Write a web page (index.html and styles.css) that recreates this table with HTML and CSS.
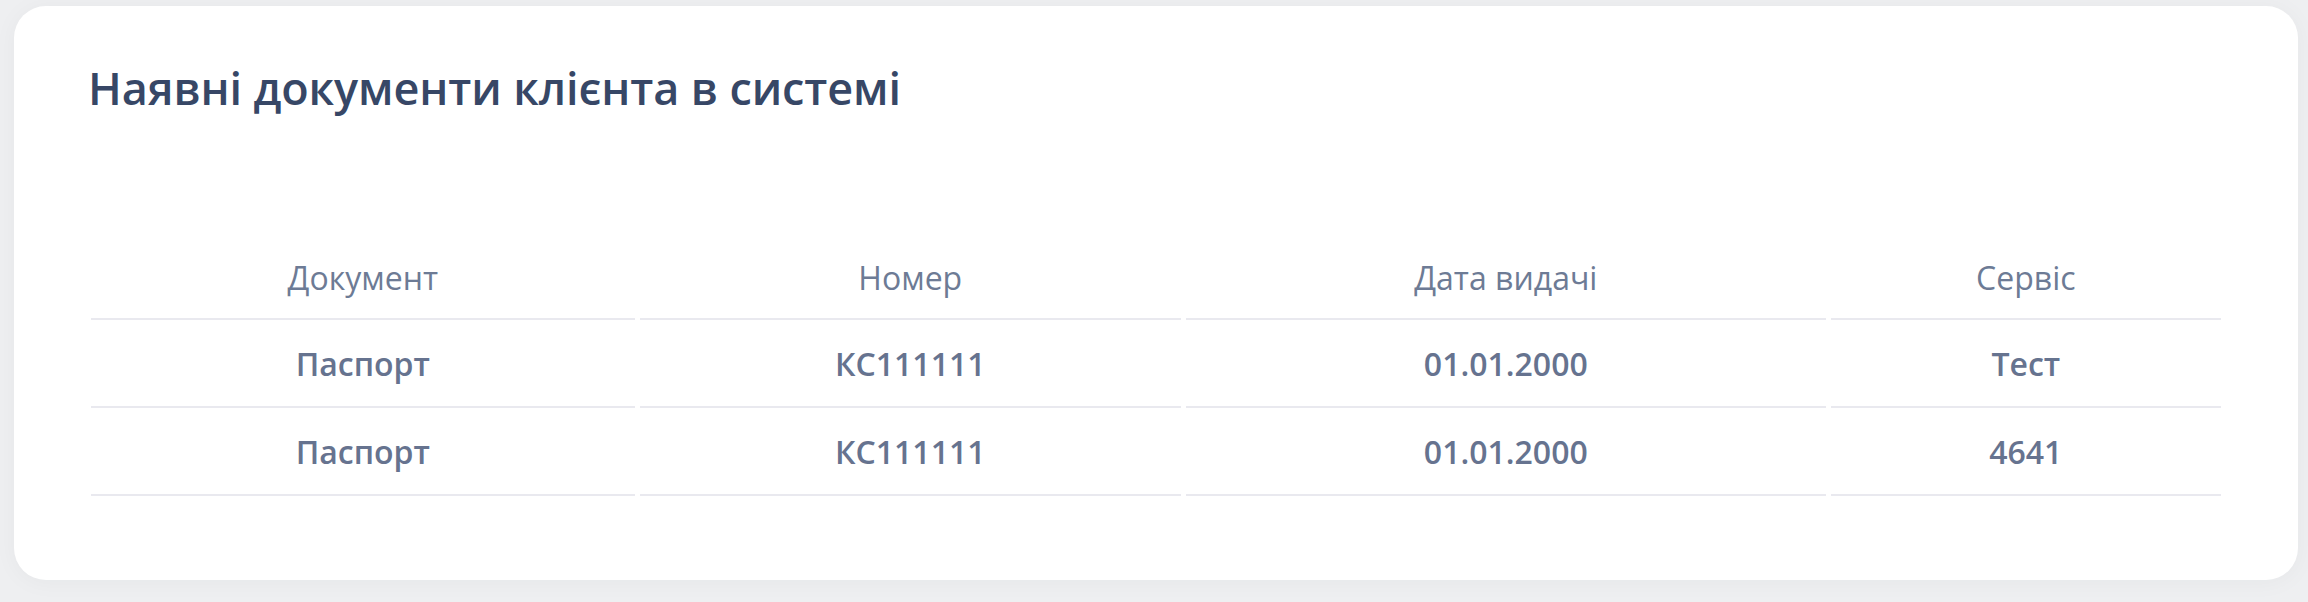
FILE: index.html
```html
<!DOCTYPE html>
<html lang="uk">
<head>
<meta charset="utf-8">
<link rel="stylesheet" href="styles.css">
</head>
<body>
<div class="page">
  <section class="card">
    <h1 class="title">Наявні документи клієнта в системі</h1>
    <table class="docs">
      <colgroup>
        <col class="c1"><col class="c2"><col class="c3"><col class="c4">
      </colgroup>
      <thead>
        <tr><th>Документ</th><th>Номер</th><th>Дата видачі</th><th>Сервіс</th></tr>
      </thead>
      <tbody>
        <tr><td>Паспорт</td><td>КС111111</td><td>01.01.2000</td><td>Тест</td></tr>
        <tr><td>Паспорт</td><td>КС111111</td><td>01.01.2000</td><td>4641</td></tr>
      </tbody>
    </table>
  </section>
</div>
</body>
</html>
```

FILE: styles.css
```css
html, body {
  margin: 0;
  padding: 0;
}
body {
  background: #eeeff1;
  font-family: "Open Sans", "Noto Sans", sans-serif;
  width: 2308px;
  height: 602px;
  overflow: hidden;
}
.page {
  padding: 6px 10px 0 14px;
}
.card {
  background: #ffffff;
  border-radius: 32px;
  height: 574px;
  box-sizing: border-box;
  padding: 52px 72px 0 72px;
  box-shadow: 0 2px 24px rgba(30, 40, 60, 0.04);
}
.title {
  margin: 0 0 0 2px;
  font-size: 45px;
  line-height: 60px;
  font-weight: 600;
  color: #374766;
  letter-spacing: -0.1px;
}
.docs {
  width: 100%;
  margin-top: 116px;
  border-collapse: separate;
  border-spacing: 5px 0;
  text-align: center;
}
.c1 { width: 543px; }
.c2 { width: 541px; }
.c3 { width: 639px; }
.c4 { width: 390px; }
.docs th, .docs td {
  height: 86px;
  padding: 0;
  border-bottom: 2px solid #e9e9ef;
  vertical-align: middle;
}
.docs th {
  box-sizing: border-box;
  padding-top: 3px;
  font-weight: 400;
  font-size: 32px;
  color: #6d7b95;
}
.docs td {
  font-weight: 600;
  font-size: 32px;
  color: #66738f;
}
```
